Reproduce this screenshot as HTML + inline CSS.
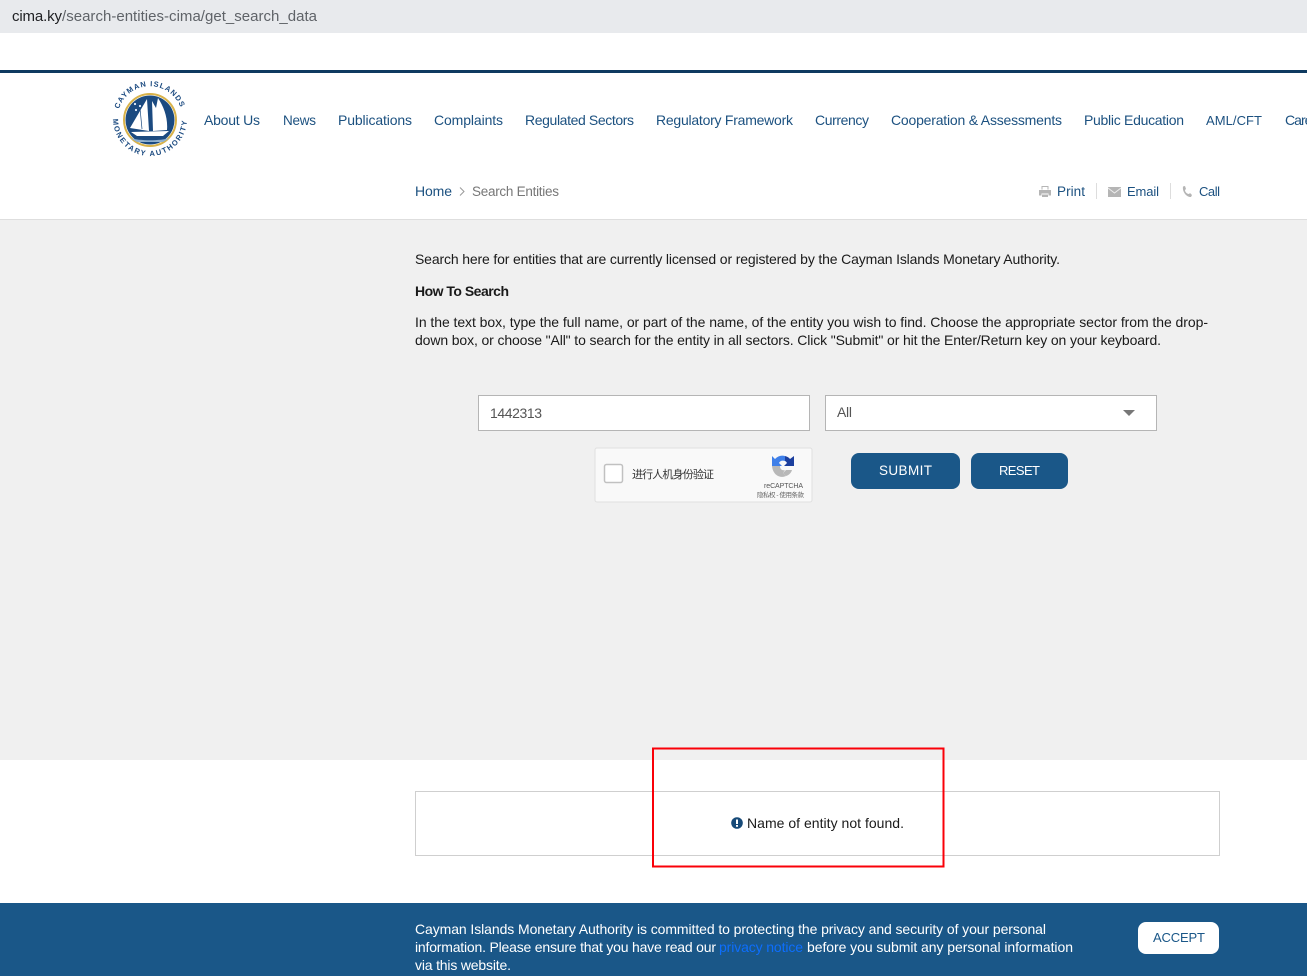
<!DOCTYPE html>
<html lang="en">
<head>
<meta charset="utf-8">
<title>Search Entities</title>
<style>
html,body{margin:0;padding:0;width:1307px;height:976px;overflow:hidden;background:#fff}
svg{display:block;position:absolute;left:0;top:0}
text{font-family:"Liberation Sans","Noto Sans CJK SC",sans-serif;font-size:14px;white-space:pre}
.n{fill:#1c5180}
.k{fill:#1a1a1a}
.f{fill:#fff}
</style>
</head>
<body>
<svg width="1307" height="976" viewBox="0 0 1307 976" xmlns="http://www.w3.org/2000/svg">
  <!-- backgrounds -->
  <rect width="1307" height="976" fill="#fff"/>
  <rect width="1307" height="33" fill="#e8eaed"/>
  <rect y="70" width="1307" height="3" fill="#0f3a60"/>
  <rect y="219" width="1307" height="541" fill="#f0f0f0"/>
  <rect y="219" width="1307" height="1" fill="#dedede"/>
  <rect y="903" width="1307" height="73" fill="#1a5788"/>

  <!-- url bar -->
  <text x="12" y="21" style="font-size:15px" fill="#202124" textLength="50">cima.ky</text>
  <text x="62" y="21" style="font-size:15px" fill="#5f6368" textLength="255">/search-entities-cima/get_search_data</text>

  <!-- logo -->
  <g>
    <defs>
      <path id="arcTop" d="M119 109A32.500 32.500 0 0 1 181 109"/>
      <path id="arcBot" d="M113 119A37 37 0 0 0 187 119"/>
    </defs>
    <circle cx="150" cy="120" r="26" fill="#fff" stroke="#d8b24a" stroke-width="2"/>
    <circle cx="150" cy="120" r="24.500" fill="#1b4a80"/>
    <path d="M147 99L130 128L149 131Z" fill="#fff"/>
    <path d="M140 108L142 129" fill="none" stroke="#1b4a80" stroke-width=".7"/>
    <path d="M152 101L153 131L167 130C168 118 164 107 158 98L156 108Z" fill="#fff"/>
    <path d="M131 132L169 131L163 136L137 136Z" fill="#fff"/>
    <path d="M130 138C140 141 160 141 170 138L163 142L137 142Z" fill="#8fb0cf"/>
    <circle cx="135" cy="104" r="1.100" fill="#e8f0ff"/>
    <circle cx="140" cy="106" r="1.100" fill="#e8f0ff"/>
    <circle cx="136" cy="110" r="1.100" fill="#e8f0ff"/>
    <text style="font-size:7.500px;font-weight:bold" fill="#1b4a80"><textPath href="#arcTop" startOffset="0" textLength="80">CAYMAN ISLANDS</textPath></text>
    <text style="font-size:7.500px;font-weight:bold" fill="#1b4a80"><textPath href="#arcBot" startOffset="0" textLength="114">MONETARY AUTHORITY</textPath></text>
  </g>

  <!-- nav -->
  <text class="n" x="204" y="125" textLength="56">About Us</text>
  <text class="n" x="283" y="125" textLength="33" style="font-size:13.500px">News</text>
  <text class="n" x="338" y="125" textLength="74">Publications</text>
  <text class="n" x="434" y="125" textLength="69">Complaints</text>
  <text class="n" x="525" y="125" textLength="109">Regulated Sectors</text>
  <text class="n" x="656" y="125" textLength="137">Regulatory Framework</text>
  <text class="n" x="815" y="125" textLength="54">Currency</text>
  <text class="n" x="891" y="125" textLength="171">Cooperation &amp; Assessments</text>
  <text class="n" x="1084" y="125" textLength="100">Public Education</text>
  <text class="n" x="1206" y="125" textLength="56" style="font-size:13px">AML/CFT</text>
  <text class="n" x="1285" y="125" textLength="44">Careers</text>

  <!-- breadcrumb -->
  <text class="n" x="415" y="196" textLength="37">Home</text>
  <path d="M460 187.500L464 191.500L460 195.500" fill="none" stroke="#999" stroke-width="1"/>
  <text x="472" y="196" fill="#777" textLength="87" style="font-size:13.500px">Search Entities</text>

  <!-- tools -->
  <path d="M1041.500 186H1048.500V189.500H1047.500V187H1042.500V189.500H1041.500ZM1039 190H1051V195.500H1048.500V193.500H1041.500V195.500H1039ZM1042 194.500H1048V197H1042Z" fill="#b5b5b5"/>
  <text class="n" x="1057" y="196" textLength="28" style="font-size:13.500px">Print</text>
  <rect x="1096" y="183" width="1" height="16" fill="#ddd"/>
  <rect x="1108" y="187" width="13" height="10" fill="#b5b5b5"/>
  <path d="M1108 188L1114.500 193L1121 188" fill="none" stroke="#eee" stroke-width="1"/>
  <text class="n" x="1127" y="196" textLength="32" style="font-size:13px">Email</text>
  <rect x="1170" y="183" width="1" height="16" fill="#ddd"/>
  <path d="M1183 186.500L1185 186L1186 189L1185 190C1185 192 1187 194 1189 194L1190 193L1192 195L1191 197C1187 197.500 1182 192 1183 186.500Z" fill="#b5b5b5"/>
  <text class="n" x="1199" y="196" textLength="21" style="font-size:13px">Call</text>

  <!-- intro -->
  <text class="k" x="415" y="264" textLength="645">Search here for entities that are currently licensed or registered by the Cayman Islands Monetary Authority.</text>
  <text class="k" x="415" y="296" style="font-weight:bold" textLength="94">How To Search</text>
  <text class="k" x="415" y="327" textLength="793">In the text box, type the full name, or part of the name, of the entity you wish to find. Choose the appropriate sector from the drop-</text>
  <text class="k" x="415" y="345" textLength="746">down box, or choose "All" to search for the entity in all sectors. Click "Submit" or hit the Enter/Return key on your keyboard.</text>

  <!-- form -->
  <rect x="478.500" y="395.500" width="331" height="35" fill="#fff" stroke="#b5b5b5"/>
  <text x="490" y="418" fill="#555" textLength="52">1442313</text>
  <rect x="825.500" y="395.500" width="331" height="35" fill="#fff" stroke="#b5b5b5"/>
  <text x="837" y="417" fill="#555" textLength="15">All</text>
  <path d="M1123 410H1135L1129 416Z" fill="#777"/>

  <!-- recaptcha -->
  <rect x="595" y="448" width="217" height="54" rx="2" fill="#f9f9f9" stroke="#dfdfdf"/>
  <rect x="604.500" y="464.500" width="18" height="18" rx="2" fill="#fff" stroke="#c1c1c1" stroke-width="1.500"/>
  <text x="632" y="478" style="font-size:11px" fill="#333" textLength="82">进行人机身份验证</text>
  <path d="M772 466H780C780 469 782 471 785 470L783 473L786 476C781 478.500 773 476 772 466Z" fill="#b8b8b8"/>
  <path d="M786 476L783 473L786 470L792 470C791 473 789 475 786 476Z" fill="#b8b8b8"/>
  <path d="M772 456L775 459C778 456 781 455 785 456L785 461C782 460 780 461 779 463L782 466H772Z" fill="#3f7fe8"/>
  <path d="M785 456C787 456.500 789 457.500 790 459L794 456V466H784L787 463C786.500 462 786 461.500 785 461Z" fill="#1c3f9e"/>
  <text x="764" y="488" style="font-size:7px" fill="#555" textLength="39">reCAPTCHA</text>
  <text x="757" y="497" style="font-size:6.500px" fill="#666" textLength="47">隐私权 - 使用条款</text>

  <!-- buttons -->
  <rect x="851" y="453" width="109" height="36" rx="8" fill="#1a5788"/>
  <text x="879" y="475" class="f" textLength="53" style="font-size:13.500px">SUBMIT</text>
  <rect x="971" y="453" width="97" height="36" rx="8" fill="#1a5788"/>
  <text x="999" y="475" class="f" textLength="41" style="font-size:13px">RESET</text>

  <!-- result -->
  <rect x="415.500" y="791.500" width="804" height="64" fill="#fff" stroke="#cfcfcf"/>
  <circle cx="737" cy="823" r="5.800" fill="#174a78"/>
  <rect x="736" y="819.500" width="2" height="4.500" fill="#fff"/>
  <rect x="736" y="825" width="2" height="1.800" fill="#fff"/>
  <text class="k" x="747" y="828" textLength="157">Name of entity not found.</text>

  <!-- annotation -->
  <rect x="653" y="748.500" width="290.500" height="118" fill="none" stroke="#fa0008" stroke-width="2"/>

  <!-- cookie banner -->
  <text class="f" x="415" y="934" textLength="631">Cayman Islands Monetary Authority is committed to protecting the privacy and security of your personal</text>
  <text class="f" x="415" y="952" textLength="301">information. Please ensure that you have read our</text>
  <text x="719" y="952" fill="#0d6efd" textLength="84">privacy notice</text>
  <text class="f" x="807" y="952" textLength="266">before you submit any personal information</text>
  <text class="f" x="415" y="970" textLength="96">via this website.</text>
  <rect x="1138" y="922" width="81" height="32" rx="8" fill="#fff"/>
  <text x="1153" y="942" fill="#1a5788" textLength="52" style="font-size:13px">ACCEPT</text>
</svg>
</body>
</html>
